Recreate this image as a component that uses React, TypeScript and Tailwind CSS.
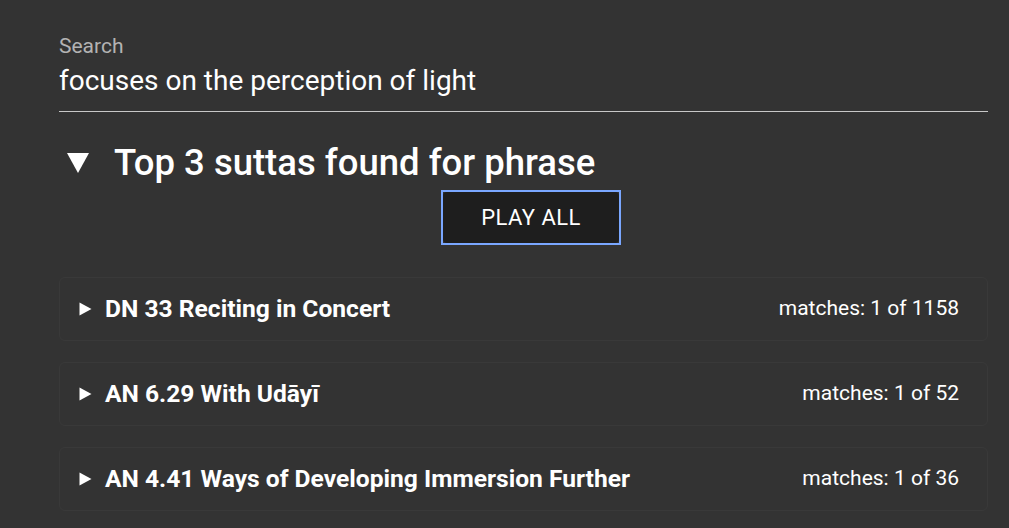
const suttas = [
  { id: 'dn33', title: 'DN 33 Reciting in Concert', matches: 'matches: 1 of 1158' },
  { id: 'an6.29', title: 'AN 6.29 With Udāyī', matches: 'matches: 1 of 52' },
  { id: 'an4.41', title: 'AN 4.41 Ways of Developing Immersion Further', matches: 'matches: 1 of 36' },
]

function Triangle({ className }: { className?: string }) {
  return (
    <svg viewBox="0 0 13 14" className={className} fill="currentColor">
      <path d="M0.5 0.5 L12.5 7 L0.5 13.5 Z" />
    </svg>
  )
}

export default function App() {
  return (
    <div
      className="min-h-screen bg-[#333333] text-white"
      style={{ fontFamily: 'Roboto, "Liberation Sans", sans-serif' }}
    >
      <div className="ml-[59px] w-[929px] pt-[34px]">
        <label className="block text-[21px] leading-[24px] text-[#b3b3b3]">Search</label>
        <div className="mt-[5px] border-b border-[#c8c8c8] pb-[12px] text-[28px] leading-[36px]">
          focuses on the perception of light
        </div>

        <div className="mt-[29px] flex items-center">
          <svg viewBox="0 0 22 20" className="ml-[8px] h-[20px] w-[22px]" fill="currentColor">
            <path d="M0 0 H22 L11 20 Z" />
          </svg>
          <h2 className="ml-[25px] text-[36.5px] font-medium leading-[44px]">
            Top 3 suttas found for phrase
          </h2>
        </div>

        <div className="mt-[5px] ml-[382px] w-[180px] border-2 border-[#7aa7ff]">
          <button className="block h-[51px] w-full rounded-[4px] bg-[#1e1e1e] text-[22px] uppercase tracking-[0.02em] text-white">
            Play all
          </button>
        </div>

        <div className="mt-[32px] flex flex-col gap-[21px]">
          {suttas.map((s) => (
            <div
              key={s.id}
              className="flex h-[64px] items-center justify-between rounded-[6px] border border-[#393939] pl-[19px] pr-[28px]"
            >
              <div className="flex items-center">
                <Triangle className="h-[14px] w-[13px]" />
                <span className="ml-[13px] text-[24.6px] font-bold">{s.title}</span>
              </div>
              <span className="text-[21px]">{s.matches}</span>
            </div>
          ))}
        </div>
      </div>
    </div>
  )
}
